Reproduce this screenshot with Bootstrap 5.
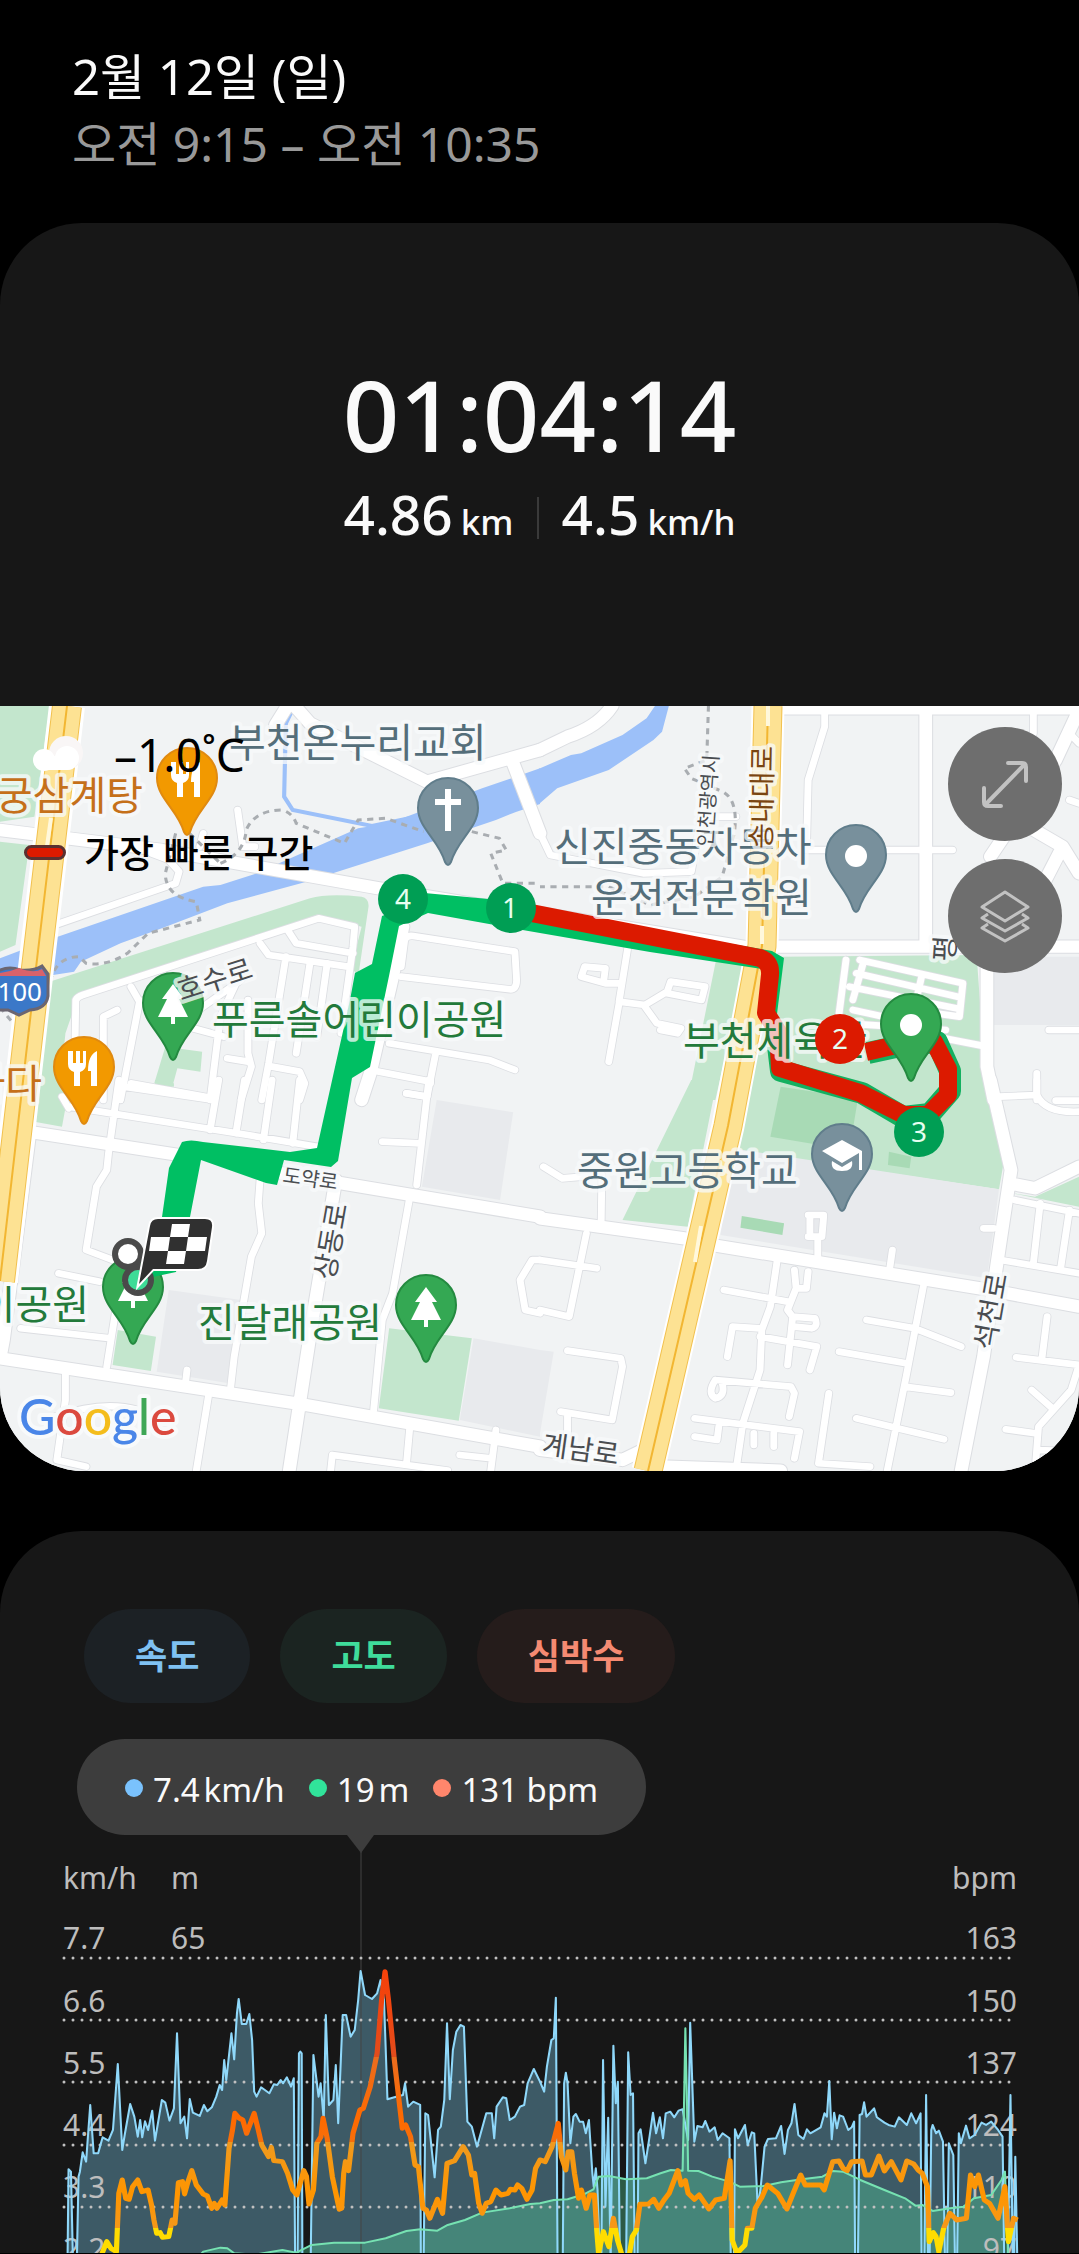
<!DOCTYPE html>
<html lang="ko">
<head>
<meta charset="utf-8">
<meta name="viewport" content="width=device-width, initial-scale=1">
<title>운동 상세</title>
<link href="https://cdn.jsdelivr.net/npm/bootstrap@5.3.0/dist/css/bootstrap.min.css" rel="stylesheet">
<style>
body{background:#000;color:#fafafa;font-family:"Noto Sans","Noto Sans CJK KR",sans-serif;overflow-x:hidden}
.head{padding:42px 72px 45px;font-size:48px;line-height:68px}
.head h1{font-size:49px;line-height:68px;font-weight:400}
.dim{color:#999}
.panel{background:#171717}
.summary{border-radius:82px 82px 0 0;padding:131px 0 145px}
.duration{font-size:99px;line-height:120px;font-weight:500}
.totals{font-size:55px;line-height:76px;font-weight:500;gap:23px;height:87px}
.totals small{font-size:35px;font-weight:500;margin-left:8px}
.rule{width:2px;height:42px;background:#3a3a3a}
.map{border-radius:0 0 84px 84px;overflow:hidden;background:#f1f3f4}
.map>svg,.chart{display:block;width:100%;height:auto}
.weather{top:24px;left:32px;gap:30px;font-size:46px;line-height:48px;color:#000}
.weather svg{width:52px;height:40px}
.legend-row{top:126px;left:24px;gap:18px;font-size:38px;line-height:40px;color:#000;font-weight:500}
.legend-key{width:42px;height:15px;border-radius:8px;background:#dc1a00;border:3px solid #5a3030}
.tools{top:21px;right:17px;gap:18px}
.tool{width:114px;height:114px;border:0;border-radius:50%;background:#6e6e6e}
.tool svg{width:50px;height:54px}
.stats{margin-top:60px;border-radius:82px 82px 0 0}
.chips{padding:78px 84px 36px;gap:30px}
.chip{border:0;border-radius:47px;height:94px;padding:0 51px;font-size:35px;font-weight:700}
.speed{background:#1c2125;color:#7fc1f2}
.climb{background:#1b2421;color:#3fdc9b}
.pulse{background:#251c1b;color:#f58a72}
.bubble{margin-left:77px;height:96px;border-radius:48px;background:#3d3d3d;padding:6px 48px 0;font-size:33px;gap:24px}
.bubble span{gap:10px}
.bubble small{font-size:33px;margin-left:-6px}
.dot{width:18px;height:18px;border-radius:50%;margin-top:-5px}
.area{fill:#c3e6cd}.grey{fill:#e8eaed}.lawn{fill:#a8dab5}.water{fill:#9cc0f9}
.rd{fill:none;stroke-linecap:round;stroke-linejoin:round}
.walk{fill:none;stroke:#a9adb1;stroke-width:9;stroke-dasharray:18 16}
.edge{--wide:43px;--thin:25px;stroke:#dcdee2}
.face{--wide:37px;--thin:20px;stroke:#fff}
.w1{stroke-width:var(--wide)}.w2{stroke-width:var(--thin)}
.hw{fill:none;stroke-linejoin:round}
.lbl{font-size:40px;font-weight:400;paint-order:stroke;stroke:#f8fafb;stroke-opacity:.75;stroke-width:8px;stroke-linejoin:round}
.way{font-size:28px;fill:#4a4d51}
.num{font-size:28px;fill:#e6fff0;text-anchor:middle}
.axis{font:30px "Noto Sans",sans-serif;fill:#bdbdbd}
.logo{font:500 50px Lato,sans-serif;paint-order:stroke;stroke:#f8fafb;stroke-width:8px;stroke-linejoin:round}
</style>
</head>
<body>
<header class="head">
  <h1 class="m-0">2월 12일 (일)</h1>
  <div class="dim">오전 9:15 – 오전 10:35</div>
</header>
<main>
<section class="panel summary text-center">
  <div class="duration">01:04:14</div>
  <div class="totals d-flex justify-content-center align-items-center">
    <div>4.86<small>km</small></div><div class="rule"></div><div>4.5<small>km/h</small></div>
  </div>
</section>

<section class="map position-relative">
<svg viewBox="0 0 1079 765" role="img" aria-label="이동 경로 지도">
<defs>
  <path id="pin" d="M0-30A30 30 0 0 1 30 0C30 20 9 32 3 54Q0 60-3 54C-9 32-30 20-30 0A30 30 0 0 1 0-30Z" stroke-width="2"/>
  <g id="tree" fill="#fff"><path d="M0-19L11-4H6L15 14H2V21H-2V14H-15L-6-4H-11Z"/></g>
  <g id="fork" fill="#fff"><path d="M-16-16v13q0 6 6 8v14h6v-14q6-2 6-8v-13h-3v12h-3v-12h-4v12h-3v-12zM13-16q-9 4-9 20h3v15h6z"/></g>
  <g id="roads">
    <g transform="translate(0 -6) scale(.3444 .3333)">
      <path class="w1" d="M0 390L470 450L1100 565L1568 645M855 17L900 70L1240 245L1568 150M835 17L800 75M1490 190L1568 400M1170 680L1140 830L1075 1120L1050 1200"/>
      <path class="w2" d="M690 330L705 440L740 440M590 400L580 440M160 675L510 550L520 515L490 480L440 460M215 1200L220 900Q225 890 240 885L925 655L1030 680L1025 740L990 1000M1025 760L860 730L835 690M755 730L780 765L1010 800M830 770L780 1090L760 1200M900 790L860 1060M950 790L920 1010M380 860L405 905L350 1200M405 905L640 830M300 1200L300 950L340 930M690 840L640 950L610 1200M560 985L650 1010M480 1000L700 840M720 900L720 1060L730 1100L700 1200M660 1075L720 1085M790 1100L870 1115L885 1150L870 1200M1165 800L1175 720Q1180 705 1200 708L1495 755L1500 840Q1500 870 1480 868L1165 830M1130 1030L1420 1080L1495 1110M1265 1060L1240 1190L1180 1180M1075 1110L1250 1145M360 1160L620 1200"/>
    </g>
    <g transform="translate(540 -6) scale(.3438 .3333)">
      <path class="w1" d="M0 640L620 745L680 740H1568M700 25H1568M1122 25V740M210 17Q170 80 80 110L0 150M1568 30L1500 180L1310 470M1420 380L1520 440L1568 520M1520 440L1460 560M1300 740L1300 1100L1320 1200"/>
      <path class="w2" d="M828 30V80L780 240L775 450H1200M1435 30V100M1540 100L1568 130M1540 300L1568 310M0 400L30 465L300 520L440 515L470 350L570 350M255 745L230 905L305 915L370 875L380 845L480 860L470 900L370 880M305 920L340 970L410 985L400 1000L350 990M230 910L200 1085M235 850L190 850L120 830L130 800L190 805L185 845M890 780L870 940M1480 990H1568M1100 1000L1300 1040M1445 1120V1200"/>
      <path class="w2" d="M930 780L1230 850L1220 950L1080 930M920 820L1215 890M900 860L1210 925M1110 830L1090 920M940 790L910 900M910 930L1000 950M890 970L1180 990"/>
    </g>
    <g transform="translate(0 374) scale(.3444 .3333)">
      <path class="w1" d="M50 150L520 225M820 280L1568 410M0 835L860 970L1568 1100M975 300L910 700L840 1172M85 170L10 780L0 835"/>
      <path class="w2" d="M345 0L315 220L310 270L280 320L250 510L340 545M200 80L720 165L920 200M380 10L620 55M635 0L610 150M710 0L685 160M790 0L765 180M870 0L850 190M180 50L200 85M755 300L750 370L760 460L730 530L680 830L670 920M1245 0L1210 315M1180 40L1240 50M1110 185L1220 190M1190 350L1140 640L1110 720L1085 990M170 580L290 605M60 745L320 775M350 600L310 860M543 870L538 915M190 880L190 960L165 1140L250 1160M605 950L570 1172M960 1172L965 1125L1180 1155L1190 1040M1180 1155L1300 1172M1440 1050L1425 1172M1335 1125L1425 1135M1568 540H1545L1510 600L1525 690L1568 700M160 1010Q300 960 400 990M1250 0V10"/>
    </g>
    <g transform="translate(540 374) scale(.3438 .3333)">
      <path class="w1" d="M0 415L420 475M500 495L1280 625L1568 680M1310 0L1370 270L1335 510L1290 830L1225 1172M1365 310L1440 325L1568 260M0 1110L240 1140L300 1110M370 1160L700 1172"/>
      <path class="w2" d="M10 260L65 295L180 285L178 420M135 460L85 710L0 690M0 540L165 565M80 812L235 835L240 860L210 1020L60 995M80 1000V1060M690 540L670 680L645 750L640 870L590 1030L570 1172M535 630L720 665M740 570L745 625H775L780 575M745 625L720 690L735 710L720 855M735 710L800 715Q810 740 790 745L740 740M640 770L805 800L785 870M640 745L560 740L545 830M510 900L730 920L740 940L725 1010M510 900Q485 940 510 955Q540 950 530 910M450 1015L755 1055L740 1135M520 1040L515 1080L450 1070M622 1060V1095M680 1060V1100M840 940L810 1150L960 1160M1115 620L1065 890L1010 1172M950 720L1090 745L1225 800M870 815L1065 850M1060 920L1195 938M920 1015L1040 1045L1175 1078M1025 510L1018 560M808 540V480M780 405H825M785 470V415M825 410L820 470H780M1290 445H1320M1340 540L1568 580M1380 360L1568 400M1455 370L1435 550M1540 390L1515 560M1335 50L1445 45V0M1445 45Q1470 100 1568 95M1500 62H1568M1475 710L1460 835M1385 832L1568 855L1545 930L1450 1040L1440 1172M1430 930L1490 985M1355 1048L1440 1060M1450 1110L1568 1115"/>
    </g>
  </g>
</defs>
<rect width="1079" height="765" fill="#f1f3f4"/>
<g transform="translate(0 -6) scale(.3444 .3333)">
  <path class="area" d="M0 17H145L100 350L0 365ZM0 425L85 435L45 735L0 755ZM130 850L900 595Q950 580 1050 590Q1072 595 1070 620L1040 830L1020 800L1050 680L920 645L230 880L190 1000L170 1200H115ZM480 1040L587 1055L582 1115L515 1105L500 1162L448 1150Z"/>
  <path class="water" d="M0 775L140 720L590 560L640 555L740 522L1040 385L1130 370L1400 265L1568 205V312L1500 335L1440 360L1240 430L980 515L890 545L660 610L470 685L350 730L235 785L215 815L0 850Z"/>
  <path d="M855 17L830 70L825 290L850 330L1080 378L1210 350" fill="none" stroke="#9cc0f9" stroke-width="12"/>
</g>
<g transform="translate(540 -6) scale(.3438 .3333)">
  <path class="water" d="M-3 206L90 165L120 160L240 105L310 55L335 17H375L355 95L330 120L200 210L50 265L-3 312Z"/>
  <path class="area" d="M515 765L600 790L510 1200H430ZM700 770L1270 765L1300 1200H600Z"/>
  <path class="grey" d="M1320 770H1568V975H1320Z"/>
</g>
<g transform="translate(0 374) scale(.3444 .3333)">
  <path class="area" d="M115 0H205L180 140L100 125ZM450 0L505 10V20L450 15ZM342 750L453 770L438 873L327 855ZM1130 745L1370 775L1332 1022L1100 985Z"/>
  <path class="grey" d="M1268 60L1490 97L1452 360L1225 320ZM490 630L700 660L665 910L455 875ZM1375 775L1568 810V1070L1335 1020Z"/>
</g>
<g transform="translate(540 374) scale(.3438 .3333)">
  <path class="area" d="M440 0H515L430 440L240 420ZM620 0H1295L1350 240L1335 328L560 210ZM1375 340L1440 350L1568 290V380Z"/>
  <path class="grey" d="M0 810L40 815L0 1060ZM560 205L1335 328L1300 595L525 465Z"/>
  <path class="lawn" d="M700 20L925 55L900 210L670 170ZM1015 215L1080 230L1075 265L1012 255ZM587 408L710 430L705 465L583 443Z"/>
</g>
<use href="#roads" class="rd edge"/><use href="#roads" class="rd face"/>
<g transform="translate(0 -6) scale(.3444 .3333)">
  <path class="walk" d="M640 490Q710 460 715 390Q740 330 820 330Q850 340 860 370L1000 430L1040 360L1120 355L1230 395M1370 395L1450 415L1470 450L1425 460L1460 550H1568M510 400L480 520Q480 590 570 605L580 660L430 700L370 760Q310 800 250 790L230 770Q170 770 150 830M0 920Q60 1010 120 1010L140 850M550 400L640 490"/>
</g>
<g transform="translate(540 -6) scale(.3438 .3333)">
  <path class="walk" d="M490 17L485 180L420 205L440 235L520 270Q580 290 565 400L530 530L450 590L320 615L200 560H0"/>
</g>
<g class="hw">
  <path d="M67 0L36 262L0 575" stroke="#fff" stroke-width="36"/><path d="M67 0L36 262L0 575" stroke="#f2c14e" stroke-width="30"/><path d="M67 0L36 262L0 575" stroke="#fde293" stroke-width="28"/><path d="M67 0L36 262L0 575" stroke="#f2b632" stroke-width="2"/>
  <path d="M768 0L762 240L728 420L648 765" stroke="#fff" stroke-width="33"/><path d="M768 0L762 240L728 420L648 765" stroke="#f2c14e" stroke-width="29"/><path d="M768 0L762 240L728 420L648 765" stroke="#fde293" stroke-width="27"/><path d="M768 0L762 240L728 420L648 765" stroke="#f2b632" stroke-width="2"/>
  <path d="M51 112L47 140M768 0V20M762 220V238M701 520L695 556" stroke="#fff8dc" stroke-width="4"/>
</g>
<g>
  <use href="#pin" x="187" y="72" fill="#f29900" stroke="#e08a10"/><use href="#fork" x="187" y="72"/>
  <use href="#pin" x="84" y="361" fill="#f29900" stroke="#e08a10"/><use href="#fork" x="84" y="361"/>
  <use href="#pin" x="448" y="102" fill="#78909c" stroke="#607d8b"/><path d="M445 83h6v10h10v6h-10v26h-6v-26h-10v-6h10z" fill="#fff"/>
  <use href="#pin" x="856" y="149" fill="#78909c" stroke="#607d8b"/><circle cx="856" cy="150" r="11" fill="#fff"/>
  <use href="#pin" x="173" y="297" fill="#34a853" stroke="#248a40"/><use href="#tree" x="173" y="297"/>
  <use href="#pin" x="842" y="448" fill="#78909c" stroke="#607d8b"/><path d="M822 445l20-11 20 11v19h-3v-17l-17 10zM832 455l10 6 10-6q2 10-10 10t-10-10z" fill="#fff"/>
  <use href="#pin" x="426" y="599" fill="#34a853" stroke="#248a40"/><use href="#tree" x="426" y="600"/>
  <use href="#pin" x="133" y="581" fill="#34a853" stroke="#248a40"/><use href="#tree" x="133" y="581"/>
</g>
<g fill="#00bf63">
  <path d="M403 202L403 185L511 195L650 224L772 245L784 252L782 268L777 308L766 310L762 263L650 246L511 222L428 207L399 220L389 270L370 361L352 372L338 455L331 461L284 454L277 479L266 477L201 454L190 511L176 566L148 572L148 560L162 511L169 462L182 436Q190 433 203 436L290 446L317 442L335 361L350 294L355 267L372 258L382 210Z"/>
</g>
<g fill="none" stroke-linejoin="round">
  <path d="M778 340L781 365L862 387L903 411L930 408L950 385V365L937 336L905 339L868 347" stroke="#14b060" stroke-width="22"/>
  <path d="M511 203L760 252Q771 256 770 269L766 307L778 326L780 362L860 387L904 409H928L948 389V363L934 336L905 337L866 346" stroke="#dc1a00" stroke-width="18"/>
</g>
<g class="lbl">
  <text x="229" y="51" fill="#546e7a">부천온누리교회</text>
  <text x="143" y="104" fill="#c5701a" text-anchor="end">궁삼계탕</text>
  <text x="212" y="328" fill="#237a3b">푸른솔어린이공원</text>
  <text x="42" y="392" fill="#c5701a" text-anchor="end">바다</text>
  <text x="554" y="155" fill="#546e7a">신진중동자동차</text>
  <text x="591" y="206" fill="#546e7a">운전전문학원</text>
  <text x="683" y="349" fill="#237a3b">부천체육관</text>
  <text x="577" y="479" fill="#546e7a">중원고등학교</text>
  <text x="198" y="631" fill="#237a3b">진달래공원</text>
  <text x="89" y="613" fill="#237a3b" text-anchor="end">어린이공원</text>
  <g class="way">
    <text transform="translate(181 295) rotate(-18)">호수로</text>
    <text transform="translate(282 476) rotate(8)" font-size="20">도약로</text>
    <text transform="translate(334 575) rotate(-80)">상동로</text>
    <text transform="translate(994 645) rotate(-80)">석천로</text>
    <text transform="translate(541 748) rotate(8)">계남로</text>
    <text transform="translate(771 143) rotate(-89)" fill="#7a4510">송내대로</text>
    <text transform="translate(712 141) rotate(-86)" font-size="20">인천광역시</text>
    <text transform="translate(954 256) rotate(-86)">평</text>
  </g>
</g>
<use href="#pin" x="911" y="318" fill="#34a853" stroke="#248a40"/><circle cx="911" cy="319" r="11" fill="#fff"/>
<g><circle cx="403" cy="193" r="25" fill="#009e54"/><circle cx="511" cy="202" r="25" fill="#009e54"/><circle cx="840" cy="333" r="25" fill="#dc1a00"/><circle cx="919" cy="426" r="25" fill="#009e54"/></g>
<g class="num"><text x="403" y="203">4</text><text x="510" y="212">1</text><text x="840" y="343">2</text><text x="919" y="436">3</text></g>
<path d="M-18 264Q-8 268 0 264Q10 260 20 264Q34 265 42 260L48 268V290Q46 303 30 304L19 309L8 304H-18Z" fill="#3b78c8" stroke="#6b6570" stroke-width="3"/><path d="M-16 266Q0 270 19 262Q34 268 42 263L46 270H-16Z" fill="#d8626a"/>
<text x="42" y="295" font-size="26" fill="#fff" text-anchor="end">100</text>
<circle cx="128" cy="548" r="13" fill="#fff" stroke="#4a4a4a" stroke-width="6"/><circle cx="138" cy="574" r="13" fill="#3ddc97" stroke="#4a4a4a" stroke-width="6"/>
<path d="M158 513H205Q213 513 212 521L207 555Q206 563 198 563H153L139 578L150 520Q151 513 158 513Z" fill="#303030" stroke="#fff" stroke-width="4" paint-order="stroke"/>
<path d="M172 518H190L188 531H170ZM151 531H170L168 545H149ZM188 531H207L205 545H186ZM168 545H186L184 558H166Z" fill="#fff"/>
<text class="logo" x="19" y="729"><tspan fill="#4a86e8">G</tspan><tspan fill="#db4a3f">o</tspan><tspan fill="#f4bd1c">o</tspan><tspan fill="#4a86e8">g</tspan><tspan fill="#3fa757">l</tspan><tspan fill="#db4a3f">e</tspan></text>
</svg>
<div class="weather position-absolute d-flex align-items-center">
  <svg viewBox="0 0 52 40"><circle cx="34" cy="19" r="17" fill="#f9f6f6"/><circle cx="12" cy="26" r="11" fill="#fff"/><path d="M12 22H34V36H12Z" fill="#fff"/><circle cx="35" cy="24" r="12" fill="#fff"/></svg>
  <span>–1.0˚C</span>
</div>
<div class="legend-row position-absolute d-flex align-items-center"><span class="legend-key"></span><span>가장 빠른 구간</span></div>
<div class="tools position-absolute d-flex flex-column">
  <button class="tool p-0" aria-label="지도 확대"><svg viewBox="0 0 50 54" fill="none" stroke="#c2c2c2" stroke-width="4" stroke-linecap="round" stroke-linejoin="round"><path d="M5 48L45 7M28 6H42Q46 6 46 10V24M4 31V45Q4 49 8 49H21"/></svg></button>
  <button class="tool p-0" aria-label="지도 유형"><svg viewBox="0 0 50 54" fill="none" stroke="#c2c2c2" stroke-width="3" stroke-linejoin="round"><path d="M25 3L48 18L25 32L2 18ZM8 25L2 29L25 42L48 29L42 25M8 35L2 39L25 52L48 39L42 35"/></svg></button>
</div>
</section>

<section class="panel stats">
  <div class="chips d-flex"><button class="chip speed">속도</button><button class="chip climb">고도</button><button class="chip pulse">심박수</button></div>
  <div class="bubble d-inline-flex align-items-center">
    <span class="d-flex align-items-center"><i class="dot" style="background:#7ac2fd"></i>7.4 <small>km/h</small></span>
    <span class="d-flex align-items-center"><i class="dot" style="background:#31e39a"></i>19 <small>m</small></span>
    <span class="d-flex align-items-center"><i class="dot" style="background:#ff866c"></i>131 bpm</span>
  </div>
  <svg class="chart" viewBox="0 0 1079 418" role="img" aria-label="속도, 고도, 심박수 그래프">
    <defs>
      <linearGradient id="zones" gradientUnits="userSpaceOnUse" x1="0" y1="0" x2="0" y2="1100">
        <stop offset="0" stop-color="#ff3c00"/><stop offset=".3" stop-color="#f04510"/><stop offset=".427" stop-color="#e24c1c"/><stop offset=".427" stop-color="#ea6c1e"/><stop offset=".6" stop-color="#ff6a00"/><stop offset=".659" stop-color="#f56f0c"/><stop offset=".659" stop-color="#ee9a20"/><stop offset=".8" stop-color="#ff9500"/><stop offset=".894" stop-color="#f5981a"/><stop offset=".894" stop-color="#ffdc00"/>
      </linearGradient>
    </defs>
    <path d="M347 0H374L361 18Z" fill="#3d3d3d"/>
    <g transform="translate(0 65) scale(.3444 .3333)">
      <path id="speedArea" fill="#3d5a66"/><path id="climbArea" fill="#54d39c" fill-opacity=".36"/>
    </g>
    <path d="M361 17V419" stroke="#444" stroke-width="1"/>
    <path d="M64 123H1012M64 185H1012M64 247H1012M64 310H1012M64 372H1012" stroke="#c0c0c0" stroke-width="3" stroke-linecap="round" stroke-dasharray="0 9"/>
    <g class="axis">
      <text x="63" y="54">km/h</text><text x="171" y="54">m</text>
      <text x="63" y="114">7.7</text><text x="171" y="114">65</text><text x="63" y="177">6.6</text><text x="63" y="239">5.5</text><text x="63" y="301">4.4</text><text x="63" y="363">3.3</text><text x="63" y="425">2.2</text>
      <g text-anchor="end"><text x="1017" y="54">bpm</text><text x="1017" y="114">163</text><text x="1017" y="177">150</text><text x="1017" y="239">137</text><text x="1017" y="301">124</text><text x="1017" y="363">110</text><text x="1017" y="425">97</text></g>
    </g>
    <g transform="translate(0 65) scale(.3444 .3333)" fill="none" stroke-linejoin="round">
      <path id="speedLine" stroke="#8fd8fa" stroke-width="6"/><path id="climbLine" stroke="#76e2b2" stroke-width="6"/><path id="pulseLine" stroke="url(#zones)" stroke-width="15"/>
    </g>
  </svg>
</section>
</main>
<script src="https://cdn.jsdelivr.net/npm/bootstrap@5.3.0/dist/js/bootstrap.bundle.min.js"></script>
<script>
// Samples are "x,y" pairs; "/" is a pause, where the line drops out of the plot.
const F = 1090;
const speed = [
 "196,1090 199,808 206,815 212,1090 / 223,1090 228,830 232,815 240,757 250,785 262,615 272,760 285,760 298,712 315,722 328,690 342,492 355,750 362,705 378,612 390,650 400,710 407,660 413,712 421,664 430,690 442,632 450,722 470,600 480,608 492,662 505,625 514,400 524,670 535,650 543,715 551,597 560,638 580,648 592,615 602,634 615,622 628,590 638,555 645,570 651,480 657,540 672,400 680,478 688,340 693,297 702,372 715,372 724,342 732,420 738,575 745,590 758,562 782,580 795,553 805,555 815,540 822,550 833,532 845,560 853,535 857,1090 / 864,1090 868,460 872,455 876,460 878,1090 / 902,1090 910,465 925,590 931,550 940,660 946,345 955,615 968,600 975,495 982,670 995,345 1005,345 1018,410 1030,390 1040,300 1047,213 1060,285 1080,297 1095,280 1105,240 1115,300 1125,598 1145,592 1170,585 1176,550 1185,620 1200,605 1220,615 1222,1090 / 1230,1090 1235,640 1243,645 1262,832 1272,690 1280,680 1290,600 1298,370 1306,598 1315,450 1325,395 1337,375 1347,380 1357,665 1370,680 1385,740 1412,640 1428,640 1435,715 1442,620 1460,592 1470,595 1480,660 1495,650 1510,620 1522,615 1532,550 1550,507 1568,545",
 "12,755 20,680 33,600 40,595 46,473 51,1270 / 66,1270 70,730 75,698 80,730 88,910 97,830 104,822 115,845 125,845 133,880 142,840 152,1000 156,1040 162,985 167,1050 174,1270 / 178,1270 183,660 190,1100 198,833 205,1270 213,617 220,790 226,725 232,1270 / 250,1270 256,637 263,765 270,760 275,1270 / 283,1270 286,880 292,868 306,970 318,890 328,818 337,880 348,832 357,895 365,820 378,815 390,832 402,812 414,808 430,900 436,548 448,905 457,858 472,862 480,843 492,875 507,862 516,900 530,880 550,895 554,1270 / 563,1270 566,868 575,895 595,855 603,915 615,877 622,880 632,1100 640,1050 652,920 662,897 685,895 700,858 710,942 720,870 730,850 739,792 750,885 765,897 775,868 785,880 815,862 826,820 833,830 840,723 847,898 854,818 862,865 870,826 880,830 895,870 905,862 912,845 915,1270 / 923,1270 928,825 935,822 941,787 948,830 970,805 978,832 1000,848 1012,855 1030,860 1042,832 1065,855 1078,820 1092,850 1105,820 1108,1270 / 1116,1270 1121,765 1127,1270 / 1131,1270 1136,870 1140,855 1150,880 1158,872 1170,905 1176,1270 / 1182,1270 1187,910 1200,945 1205,1270 / 1211,1270 1216,880 1222,910 1237,857 1247,895 1262,885 1282,848 1295,855 1310,845 1330,870 1343,890 1348,1270 / 1358,1270 1366,765 1373,1270 / 1376,1270 1380,950 1386,1270"];
const climb = [
 "560,1090 590,1055 640,1043 660,1045 680,1060 740,1064 820,1050 860,1058 905,1035 970,1028 1060,1028 1120,1015 1180,993 1220,988 1270,992 1300,975 1350,960 1400,938 1480,925 1540,912 1568,910",
 "40,1080 80,1078 130,1062 155,1048 170,1010 200,1008 250,1018 310,1015 350,1000 380,990 414,992 418,800 422,565 427,800 430,992 460,993 500,1010 550,1025 580,1040 650,1038 700,1027 760,1018 820,1010 850,993 880,995 930,1020 1000,1050 1060,1075 1090,1097 1110,1095 1140,1113 1190,1105 1230,1100 1260,1075 1310,1065 1340,1020 1350,995 1360,1270"];
const pulse = [
 "285,1090 310,1025 322,1045 338,1055 345,880 355,840 365,895 375,898 385,860 400,840 412,875 430,870 440,915 447,960 455,1000 465,998 472,1012 490,1010 500,960 508,970 518,848 530,845 536,882 545,848 557,812 570,855 590,882 602,888 615,925 622,910 630,925 645,900 653,915 665,745 675,690 682,640 695,655 705,660 716,700 738,640 750,690 760,735 780,770 788,742 795,782 820,785 835,820 850,870 862,885 882,812 890,830 897,912 910,870 920,730 932,710 938,655 950,715 965,830 985,928 992,925 998,820 1003,785 1012,812 1025,700 1045,630 1055,625 1075,560 1095,460 1108,300 1118,215 1128,300 1145,480 1168,685 1178,675 1192,710 1205,795 1215,800 1228,925 1238,930 1248,955 1270,898 1285,940 1298,790 1320,782 1345,740 1360,765 1370,825 1378,820 1390,910 1400,940 1412,910 1425,905 1440,870 1455,885 1475,880 1482,868 1495,870 1503,855 1515,865 1530,898 1545,870 1555,805 1568,780",
 "15,965 35,920 53,850 62,950 75,990 82,935 92,935 100,1000 112,1075 120,1050 134,1105 145,1065 158,1065 165,1175 170,1240 184,1175 200,1220 213,1135 225,1200 245,1270 260,1240 268,1190 280,1170 290,1093 315,1092 330,1078 345,1105 360,1080 375,1060 400,992 410,1035 422,1022 430,1060 448,1078 462,1065 490,1107 510,1080 535,1075 552,962 558,1200 572,1240 595,1215 602,1165 615,1165 625,1105 645,1070 660,1035 690,1060 717,1107 735,1060 757,1005 770,1035 815,1035 825,1050 850,965 868,963 880,985 892,992 905,965 935,963 945,1005 962,1005 984,948 1000,993 1020,965 1048,1020 1065,963 1085,972 1098,990 1110,1000 1125,1040 1130,1205 1142,1178 1150,1190 1158,1235 1172,1165 1190,1120 1210,1140 1238,1135 1250,1005 1262,1040 1273,1005 1290,1080 1305,1090 1330,1135 1350,1040 1360,1205 1375,1135 1387,1140"];
// The second half of the workout is recorded from its own origin.
const second = t => t.replace(/(\d+),(\d+)/g, (m, x, y) => (+x + 1568) + "," + (y - 180));
const trace = ([a, b]) => (a + " " + second(b)).split("/").map(s => "M" + s.trim().replace(/ /g, "L")).join("");
const put = (id, d) => document.getElementById(id).setAttribute("d", d);
put("speedLine", trace(speed)); put("speedArea", trace(speed));
put("climbLine", trace(climb)); put("climbArea", trace(climb) + "V" + F + "Z");
put("pulseLine", trace(pulse));
</script>
</body>
</html>
